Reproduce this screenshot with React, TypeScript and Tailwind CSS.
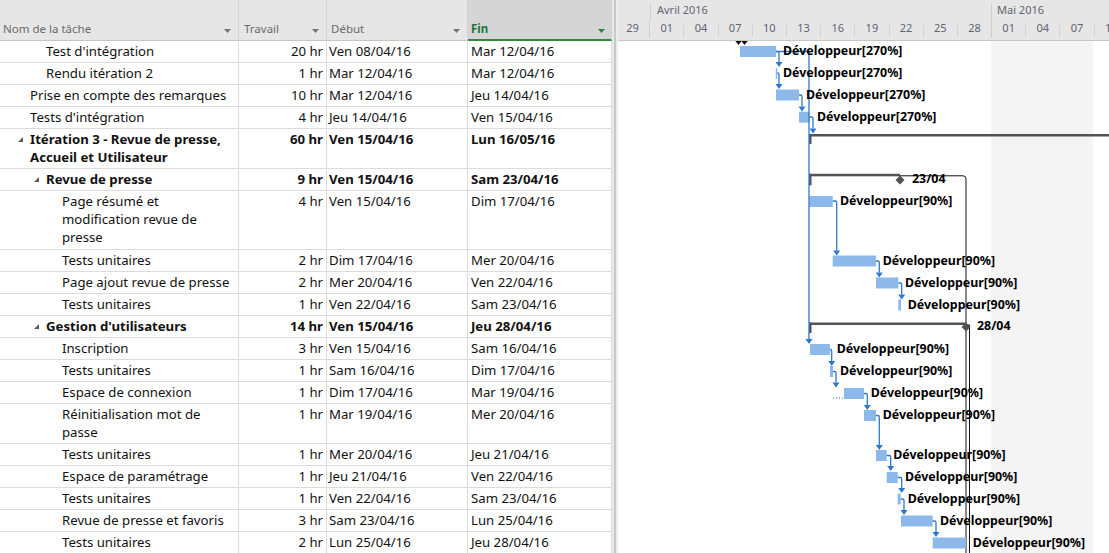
import React from "react";

type Row = {
  lines: string[];
  lvl: number;
  work: string;
  start: string;
  end: string;
  sum?: boolean;
  h: string;
};

const rows: Row[] = [
  { lines: ["Test d'intégration"], lvl: 1, work: "20 hr", start: "Ven 08/04/16", end: "Mar 12/04/16", h: "h-[22px]" },
  { lines: ["Rendu itération 2"], lvl: 1, work: "1 hr", start: "Mar 12/04/16", end: "Mar 12/04/16", h: "h-[22px]" },
  { lines: ["Prise en compte des remarques"], lvl: 0, work: "10 hr", start: "Mar 12/04/16", end: "Jeu 14/04/16", h: "h-[22px]" },
  { lines: ["Tests d'intégration"], lvl: 0, work: "4 hr", start: "Jeu 14/04/16", end: "Ven 15/04/16", h: "h-[22px]" },
  { lines: ["Itération 3 - Revue de presse,", "Accueil et Utilisateur"], lvl: 0, sum: true, work: "60 hr", start: "Ven 15/04/16", end: "Lun 16/05/16", h: "h-[40px]" },
  { lines: ["Revue de presse"], lvl: 1, sum: true, work: "9 hr", start: "Ven 15/04/16", end: "Sam 23/04/16", h: "h-[22px]" },
  { lines: ["Page résumé et", "modification revue de", "presse"], lvl: 2, work: "4 hr", start: "Ven 15/04/16", end: "Dim 17/04/16", h: "h-[59px]" },
  { lines: ["Tests unitaires"], lvl: 2, work: "2 hr", start: "Dim 17/04/16", end: "Mer 20/04/16", h: "h-[22px]" },
  { lines: ["Page ajout revue de presse"], lvl: 2, work: "2 hr", start: "Mer 20/04/16", end: "Ven 22/04/16", h: "h-[22px]" },
  { lines: ["Tests unitaires"], lvl: 2, work: "1 hr", start: "Ven 22/04/16", end: "Sam 23/04/16", h: "h-[22px]" },
  { lines: ["Gestion d'utilisateurs"], lvl: 1, sum: true, work: "14 hr", start: "Ven 15/04/16", end: "Jeu 28/04/16", h: "h-[22px]" },
  { lines: ["Inscription"], lvl: 2, work: "3 hr", start: "Ven 15/04/16", end: "Sam 16/04/16", h: "h-[22px]" },
  { lines: ["Tests unitaires"], lvl: 2, work: "1 hr", start: "Sam 16/04/16", end: "Dim 17/04/16", h: "h-[22px]" },
  { lines: ["Espace de connexion"], lvl: 2, work: "1 hr", start: "Dim 17/04/16", end: "Mar 19/04/16", h: "h-[22px]" },
  { lines: ["Réinitialisation mot de", "passe"], lvl: 2, work: "1 hr", start: "Mar 19/04/16", end: "Mer 20/04/16", h: "h-[40px]" },
  { lines: ["Tests unitaires"], lvl: 2, work: "1 hr", start: "Mer 20/04/16", end: "Jeu 21/04/16", h: "h-[22px]" },
  { lines: ["Espace de paramétrage"], lvl: 2, work: "1 hr", start: "Jeu 21/04/16", end: "Ven 22/04/16", h: "h-[22px]" },
  { lines: ["Tests unitaires"], lvl: 2, work: "1 hr", start: "Ven 22/04/16", end: "Sam 23/04/16", h: "h-[22px]" },
  { lines: ["Revue de presse et favoris"], lvl: 2, work: "3 hr", start: "Sam 23/04/16", end: "Lun 25/04/16", h: "h-[22px]" },
  { lines: ["Tests unitaires"], lvl: 2, work: "2 hr", start: "Lun 25/04/16", end: "Jeu 28/04/16", h: "h-[22px]" },
];

// padding for plain rows, and for summary rows (collapse triangle sits before the text)
const indent = ["pl-[30px]", "pl-[46px]", "pl-[62px]"];
const sumIndent = ["pl-[18px]", "pl-[34px]", "pl-[50px]"];

const days = ["29", "01", "04", "07", "10", "13", "16", "19", "22", "25", "28", "01", "04", "07", "10"];

function Caret({ green }: { green?: boolean }) {
  return (
    <svg width="7" height="4" viewBox="0 0 7 4" className="mb-[4px] shrink-0">
      <path d="M0 0H7L3.5 4Z" fill={green ? "#2a8a3a" : "#747474"} />
    </svg>
  );
}

function Collapse() {
  return (
    <svg width="5" height="5" viewBox="0 0 5 5" className="mr-[7px] mt-[7px] shrink-0">
      <path d="M5 0V5H0Z" fill="#5a5a5a" />
    </svg>
  );
}

function TableHeader() {
  return (
    <div className="flex h-[41px] bg-[#e6e6e6] text-[11.5px] text-[#6a6a6a]">
      <div className="flex w-[239px] items-end justify-between border-r border-b border-r-[#d3d3d3] border-b-[#c6c6c6] pb-[3px] pl-[3px] pr-[7px]">
        <span className="leading-[16px]">Nom de la tâche</span>
        <Caret />
      </div>
      <div className="flex w-[88px] items-end justify-between border-r border-b border-r-[#d3d3d3] border-b-[#c6c6c6] pb-[3px] pl-[5px] pr-[7px]">
        <span className="leading-[16px]">Travail</span>
        <Caret />
      </div>
      <div className="flex w-[141px] items-end justify-between border-r border-b border-r-[#d3d3d3] border-b-[#c6c6c6] pb-[3px] pl-[4px] pr-[7px]">
        <span className="leading-[16px]">Début</span>
        <Caret />
      </div>
      <div className="flex w-[144px] items-end justify-between border-r border-b-2 border-r-[#d3d3d3] border-b-[#2e8b3a] bg-[#d5d5d5] pb-[2px] pl-[3px] pr-[6px]">
        <span className="font-bold leading-[16px] text-[#23743a]">Fin</span>
        <Caret green />
      </div>
    </div>
  );
}

function TableRow({ r }: { r: Row }) {
  const cell = "border-r border-b border-[#dcdcdc] pt-[1px] leading-[18px]";
  return (
    <div className={`flex ${r.h} ${r.sum ? "font-bold" : ""}`}>
      <div className={`flex w-[239px] items-start ${cell} ${r.sum ? sumIndent[r.lvl] : indent[r.lvl]}`}>
        {r.sum && <Collapse />}
        <div>
          {r.lines.map((l, i) => (
            <div key={i} className="whitespace-nowrap">{l}</div>
          ))}
        </div>
      </div>
      <div className={`w-[88px] pr-[3px] text-right ${cell}`}>{r.work}</div>
      <div className={`w-[141px] pl-[2px] ${cell}`}>{r.start}</div>
      <div className={`w-[144px] pl-[3px] ${cell}`}>{r.end}</div>
    </div>
  );
}

function ChartHeader() {
  return (
    <div className="h-[41px] overflow-hidden border-b border-[#c6c6c6] bg-[#e6e6e6] text-[11px] text-[#5f6571]">
      <div className="flex h-[20px]">
        <div className="w-[32px] shrink-0" />
        <div className="mt-[4px] h-[16px] w-[341px] shrink-0 border-l border-[#cdcdcd] pl-[6px] leading-[12px]">Avril 2016</div>
        <div className="mt-[4px] h-[16px] flex-1 border-l border-[#cdcdcd] pl-[5px] leading-[12px]">Mai 2016</div>
      </div>
      <div className="ml-[-2px] flex h-[20px]">
        {days.map((d, i) => (
          <div key={i} className="flex w-[34.2px] shrink-0">
            <span className="flex-1 pt-[1px] text-center leading-[14px]">{d}</span>
            <span className={i === 0 || i === 10 ? "h-[18px] w-px bg-[#cdcdcd]" : "mt-[5px] h-[12px] w-px bg-[#d2d2d2]"} />
          </div>
        ))}
      </div>
    </div>
  );
}

const BAR = "#8cb9e9";
const LINK = "#2e78cc";
const SUM = "#525252";

// x1, x2, top, label x, label
const bars: [number, number, number, number, string][] = [
  [740, 776, 46, 783, "Développeur[270%]"],
  [775.8, 777.3, 68, 783, "Développeur[270%]"],
  [776, 799, 89.5, 806, "Développeur[270%]"],
  [799, 809.5, 111.7, 817, "Développeur[270%]"],
  [809.3, 832.7, 196, 840, "Développeur[90%]"],
  [832.7, 876, 255.5, 882.7, "Développeur[90%]"],
  [876, 898.3, 277.5, 905, "Développeur[90%]"],
  [898.3, 901, 299.5, 907.7, "Développeur[90%]"],
  [810, 830, 344, 836.7, "Développeur[90%]"],
  [830, 833, 366, 840, "Développeur[90%]"],
  [844, 864, 388, 870.7, "Développeur[90%]"],
  [864, 876, 410, 882.7, "Développeur[90%]"],
  [876, 886.7, 450, 893.3, "Développeur[90%]"],
  [886.7, 897.7, 472, 905, "Développeur[90%]"],
  [897.7, 900.7, 493.5, 907.7, "Développeur[90%]"],
  [901, 932.7, 515.5, 940, "Développeur[90%]"],
  [932.7, 966, 537.5, 972.7, "Développeur[90%]"],
];

// from x, from y, drop x, arrow top y
const links: [number, number, number, number][] = [
  [776, 51.5, 779, 62],
  [777.3, 73, 779, 84],
  [799, 95, 802, 106.5],
  [809.5, 117, 813, 128.5],
  [832.7, 201, 836.7, 250.5],
  [876, 261, 879.3, 272.5],
  [898.3, 283, 901.7, 294.5],
  [830, 349.5, 831.7, 361],
  [833, 371.5, 836, 382.5],
  [864, 393.5, 867.3, 405],
  [876, 415.5, 879.3, 445],
  [886.7, 455.5, 890.7, 466],
  [897.7, 477.5, 901.7, 488],
  [900.7, 499, 904, 510],
  [932.7, 521, 936, 532],
];

function arrow(x: number, y: number) {
  return `${x - 3.5},${y} ${x + 3.5},${y} ${x},${y + 5}`;
}

function GanttBody() {
  const label = { fontFamily: "'Noto Sans', sans-serif", fontWeight: 700, fontSize: 12.4 };
  return (
    <svg width="491" height="512" viewBox="618 41 491 512" className="block">
      <rect x="991" y="41" width="102" height="512" fill="#f4f4f4" />

      {/* black links out of the summaries */}
      <path d="M900 175.8H963Q966 175.8 966 178.8V553" fill="none" stroke="#111" strokeWidth="1" />
      <path d="M966 325H969.5V553" fill="none" stroke="#111" strokeWidth="1" />

      {/* summary bars */}
      <polygon points="735,40.5 742,40.5 738.5,45" fill="#111" />
      <polygon points="741,40.5 748,40.5 744.5,45" fill="#111" />
      <rect x="809" y="134" width="300" height="2.5" fill={SUM} />
      <rect x="809" y="134" width="2.5" height="10" fill={SUM} />
      <rect x="809" y="173.8" width="91" height="2.5" fill={SUM} />
      <rect x="809" y="173.8" width="2.5" height="11.5" fill={SUM} />
      <polygon points="900,175.5 904.5,180 900,184.5 895.5,180" fill={SUM} />
      <rect x="809" y="322.5" width="157" height="2.5" fill={SUM} />
      <rect x="809" y="322.5" width="2.5" height="10.5" fill={SUM} />
      <polygon points="966,322.5 970.5,327 966,331.5 961.5,327" fill={SUM} />

      {/* task bars */}
      {bars.map(([x1, x2, y], i) => (
        <rect key={i} x={x1} y={y} width={x2 - x1} height="11" fill={BAR} />
      ))}

      {/* links */}
      <path d="M776 51.5H809V339" fill="none" stroke={LINK} strokeWidth="1.3" />
      <polygon points={arrow(809, 339)} fill={LINK} />
      <path d="M833 398H843" fill="none" stroke={LINK} strokeWidth="1.2" strokeDasharray="1 2" />
      {links.map(([x1, y1, xv, y2], i) => (
        <g key={i}>
          <path d={`M${x1} ${y1}H${xv - 1.5}Q${xv} ${y1} ${xv} ${y1 + 1.5}V${y2}`} fill="none" stroke={LINK} strokeWidth="1.3" />
          <polygon points={arrow(xv, y2)} fill={LINK} />
        </g>
      ))}

      {/* labels */}
      {bars.map(([, , y, lx, t], i) => (
        <text key={i} x={lx} y={y + 4.5} dominantBaseline="central" fill="#000" style={label}>
          {t}
        </text>
      ))}
      <text x="912" y="178.5" dominantBaseline="central" fill="#000" style={label}>23/04</text>
      <text x="977" y="325.5" dominantBaseline="central" fill="#000" style={label}>28/04</text>
    </svg>
  );
}

export default function App() {
  return (
    <div className="flex h-[553px] w-[1109px] overflow-hidden bg-white font-['Noto_Sans',sans-serif]">
      <div className="w-[612px] shrink-0">
        <TableHeader />
        <div className="text-[13.2px] text-[#111]">
          {rows.map((r, i) => (
            <TableRow key={i} r={r} />
          ))}
        </div>
      </div>
      <div className="flex w-[6px] shrink-0">
        <div className="w-[2px] bg-[#eaeaea]" />
        <div className="w-[2px] bg-[#c9c9c9]" />
        <div className="w-[2px] bg-[#eeeeee]" />
      </div>
      <div className="w-[491px] shrink-0">
        <ChartHeader />
        <GanttBody />
      </div>
    </div>
  );
}
